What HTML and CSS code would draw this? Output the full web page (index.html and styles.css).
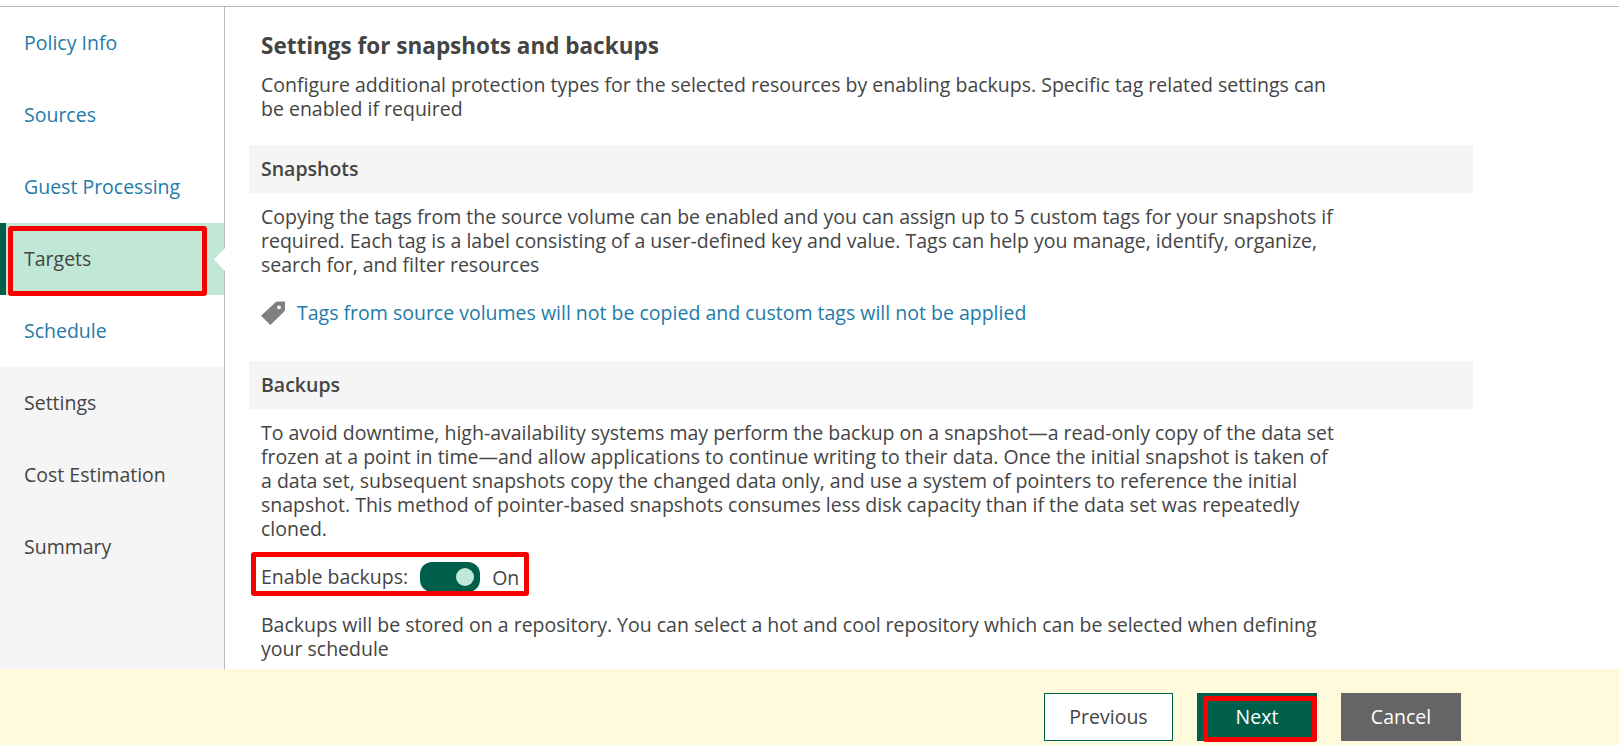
FILE: index.html
```html
<!DOCTYPE html>
<html lang="en">
<head>
<meta charset="utf-8">
<title>Policy settings</title>
<link rel="stylesheet" href="styles.css">
</head>
<body>
<div class="app">
  <div class="body">
    <nav class="sidebar">
      <a class="step">Policy Info</a>
      <a class="step">Sources</a>
      <a class="step">Guest Processing</a>
      <a class="step active">Targets<span class="notch"></span><span class="mark mark-step"></span></a>
      <a class="step">Schedule</a>
      <div class="pending">
        <span class="step">Settings</span>
        <span class="step">Cost Estimation</span>
        <span class="step">Summary</span>
      </div>
    </nav>
    <main class="content">
      <h1 class="title">Settings for snapshots and backups</h1>
      <p class="text intro">Configure additional protection types for the selected resources by enabling backups. Specific tag related settings can<br>be enabled if required</p>
      <h2 class="section">Snapshots</h2>
      <p class="text">Copying the tags from the source volume can be enabled and you can assign up to 5 custom tags for your snapshots if<br>required. Each tag is a label consisting of a user-defined key and value. Tags can help you manage, identify, organize,<br>search for, and filter resources</p>
      <a class="tag-link">
        <svg class="tag-icon" viewBox="0 0 24 24"><path fill="#808080" fill-rule="evenodd" d="M0 14.8 14.8 1 16.6.4H24v8.600L23 10.800 9.400 24ZM18 4.400a1.900 1.900 0 1 0 0 3.800 1.900 1.900 0 0 0 0-3.800Z"/></svg>
        <span>Tags from source volumes will not be copied and custom tags will not be applied</span>
      </a>
      <h2 class="section">Backups</h2>
      <p class="text">To avoid downtime, high-availability systems may perform the backup on a snapshot—a read-only copy of the data set<br>frozen at a point in time—and allow applications to continue writing to their data. Once the initial snapshot is taken of<br>a data set, subsequent snapshots copy the changed data only, and use a system of pointers to reference the initial<br>snapshot. This method of pointer-based snapshots consumes less disk capacity than if the data set was repeatedly<br>cloned.</p>
      <div class="enable">
        <span>Enable backups:</span>
        <span class="toggle"><span class="knob"></span></span>
        <span class="state">On</span>
        <span class="mark mark-enable"></span>
      </div>
      <p class="text">Backups will be stored on a repository. You can select a hot and cool repository which can be selected when defining<br>your schedule</p>
    </main>
  </div>
  <footer class="footer">
    <button class="btn previous">Previous</button>
    <button class="btn next">Next<span class="mark mark-next"></span></button>
    <button class="btn cancel">Cancel</button>
  </footer>
</div>
</body>
</html>
```
FILE: styles.css
```css
* { box-sizing: border-box; }
body {
  margin: 0;
  background: #fff;
  color: #444;
  font: 19.5px/24px "Open Sans", sans-serif;
}
.app { display: flex; flex-direction: column; height: 745px; padding-top: 6px; overflow: hidden; }
.body { display: flex; height: 663px; border-top: 1px solid #b9b9b9; }
.sidebar { display: flex; flex-direction: column; width: 225px; border-right: 1px solid #b9b9b9; }
.step { display: flex; align-items: center; height: 72px; padding-left: 24px; color: #1f7aa8; flex: none; }
.active { position: relative; border-left: 6px solid #005f4b; padding-left: 18px; background: #c1e8d6; color: #444; }
.notch {
  position: absolute; right: -1px; top: 25px; width: 11px; height: 23px;
  background: #fff; clip-path: polygon(100% 0, 0 50%, 100% 100%);
}
.mark { position: absolute; border: 5px solid #f70000; border-radius: 3px; }
.mark-step { left: 2px; top: 3px; width: 199px; height: 70px; }
.pending { flex: 1; background: #f5f5f5; }
.pending .step { color: #444; }
.content { width: 1248px; padding: 24px 0 0 24px; white-space: nowrap; }
.title { margin: 0 0 13px 12px; font-size: 22.5px; line-height: 29px; font-weight: 700; }
.text { margin: 0 0 0 12px; }
.section { display: flex; align-items: center; height: 48px; margin: 0 0 12px; padding: 0 12px; background: #f5f5f5; font-size: 19.5px; font-weight: 600; }
.intro { margin-bottom: 24px; }
.tag-link { display: flex; align-items: center; gap: 12px; margin: 24px 0 36px 12px; color: #1f7aa8; }
.tag-icon { width: 24px; height: 24px; }
.enable { position: relative; display: flex; align-items: center; height: 24px; margin: 24px 0 24px 12px; }
.toggle { display: flex; align-items: center; justify-content: flex-end; width: 60px; height: 30px; margin-left: 12px; padding-right: 6px; border-radius: 12px; background: #005f4b; }
.knob { width: 18px; height: 18px; border-radius: 50%; background: #c1e8d6; }
.state { margin-left: 12px; padding-top: 2px; }
.mark-enable { left: -10px; top: -13px; width: 278px; height: 44px; }
.footer { display: flex; justify-content: flex-end; align-items: flex-start; gap: 24px; height: 76px; padding: 24px 158px 0 0; background: #fffadc; }
.btn { position: relative; width: 120px; height: 48px; padding: 0; border: 0; color: #fff; font: inherit; flex: none; }
.previous { width: 129px; border: 1px solid #005f4b; background: #fff; color: #444; }
.next { background: #005f4b; }
.cancel { background: #656565; }
.mark-next { left: 6px; top: 3px; width: 114px; height: 46px; }
```
